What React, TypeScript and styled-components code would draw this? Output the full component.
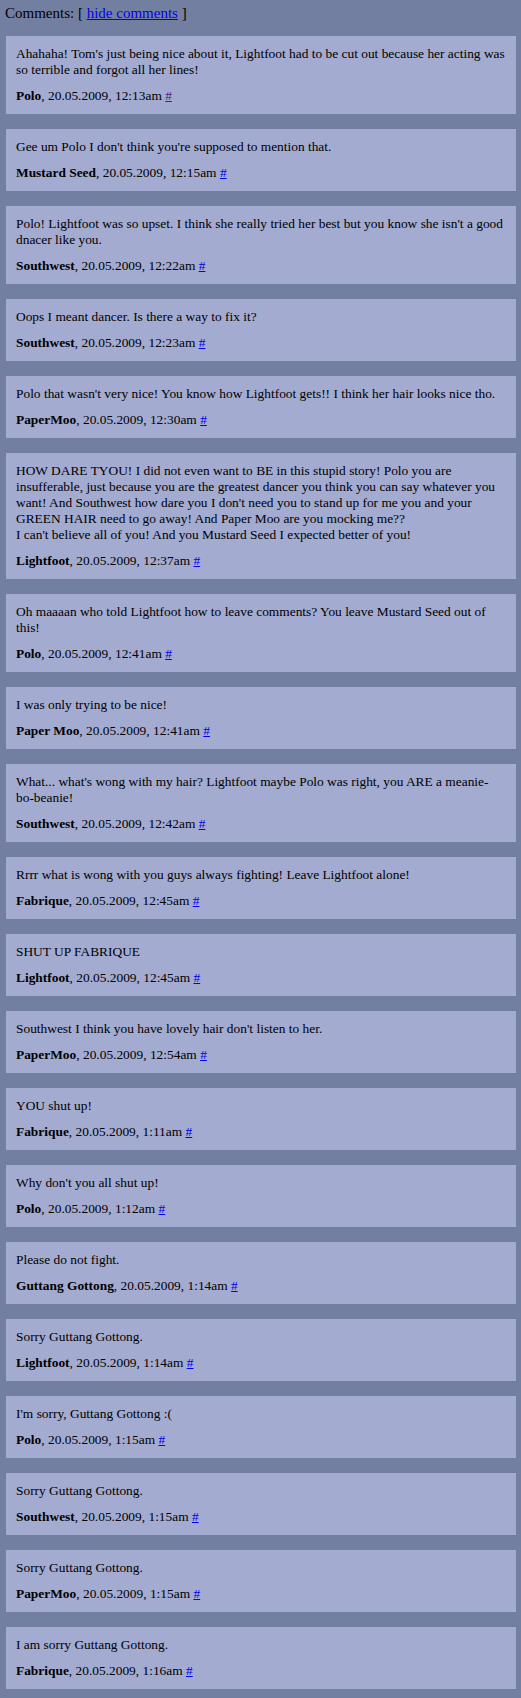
import styled, { createGlobalStyle } from "styled-components";

// old-school comment thread, one box per comment

const GlobalStyle = createGlobalStyle`
  html, body {
    margin: 0;
    padding: 0;
    background: #737fa0;
  }
  body {
    font-family: "Liberation Serif", "Times New Roman", serif;
    color: #000;
  }
`;

const Page = styled.div`
  padding: 4px 5px 9px 6px;
`;

const Header = styled.div`
  font-size: 15px;
  line-height: 18px;
  margin: 0 0 14px -1px;
`;

const Link = styled.a<{ $visited?: boolean }>`
  color: ${(p) => (p.$visited ? "#551a8b" : "#0000ee")};
  text-decoration: underline;
`;

const List = styled.div`
  display: flex;
  flex-direction: column;
  gap: 15px;
`;

const Card = styled.div`
  background: #a3abd0;
  padding: 10px;
  font-size: 13.4px;
  line-height: 16px;
`;

const Body = styled.div`
  margin-bottom: 10px;
`;

const Meta = styled.div``;

type Comment = {
  name: string;
  time: string;
  text: string[];
  visited?: boolean;
};

const comments: Comment[] = [
  {
    name: "Polo",
    time: "12:13am",
    visited: true,
    text: [
      "Ahahaha! Tom's just being nice about it, Lightfoot had to be cut out because her acting was so terrible and forgot all her lines!",
    ],
  },
  { name: "Mustard Seed", time: "12:15am", text: ["Gee um Polo I don't think you're supposed to mention that."] },
  {
    name: "Southwest",
    time: "12:22am",
    text: [
      "Polo! Lightfoot was so upset. I think she really tried her best but you know she isn't a good dnacer like you.",
    ],
  },
  { name: "Southwest", time: "12:23am", text: ["Oops I meant dancer. Is there a way to fix it?"] },
  {
    name: "PaperMoo",
    time: "12:30am",
    text: ["Polo that wasn't very nice! You know how Lightfoot gets!! I think her hair looks nice tho."],
  },
  {
    name: "Lightfoot",
    time: "12:37am",
    text: [
      "HOW DARE TYOU! I did not even want to BE in this stupid story! Polo you are insufferable, just because you are the greatest dancer you think you can say whatever you want! And Southwest how dare you I don't need you to stand up for me you and your GREEN HAIR need to go away! And Paper Moo are you mocking me??",
      "I can't believe all of you! And you Mustard Seed I expected better of you!",
    ],
  },
  {
    name: "Polo",
    time: "12:41am",
    text: ["Oh maaaan who told Lightfoot how to leave comments? You leave Mustard Seed out of this!"],
  },
  { name: "Paper Moo", time: "12:41am", text: ["I was only trying to be nice!"] },
  {
    name: "Southwest",
    time: "12:42am",
    text: ["What... what's wong with my hair? Lightfoot maybe Polo was right, you ARE a meanie-bo-beanie!"],
  },
  {
    name: "Fabrique",
    time: "12:45am",
    text: ["Rrrr what is wong with you guys always fighting! Leave Lightfoot alone!"],
  },
  { name: "Lightfoot", time: "12:45am", text: ["SHUT UP FABRIQUE"] },
  { name: "PaperMoo", time: "12:54am", text: ["Southwest I think you have lovely hair don't listen to her."] },
  { name: "Fabrique", time: "1:11am", text: ["YOU shut up!"] },
  { name: "Polo", time: "1:12am", text: ["Why don't you all shut up!"] },
  { name: "Guttang Gottong", time: "1:14am", text: ["Please do not fight."] },
  { name: "Lightfoot", time: "1:14am", text: ["Sorry Guttang Gottong."] },
  { name: "Polo", time: "1:15am", text: ["I'm sorry, Guttang Gottong :("] },
  { name: "Southwest", time: "1:15am", text: ["Sorry Guttang Gottong."] },
  { name: "PaperMoo", time: "1:15am", text: ["Sorry Guttang Gottong."] },
  { name: "Fabrique", time: "1:16am", text: ["I am sorry Guttang Gottong."] },
];

function App() {
  return (
    <Page>
      <GlobalStyle />
      <Header>
        Comments: [ <Link href="#">hide comments</Link> ]
      </Header>
      <List>
        {comments.map((c, i) => (
          <Card key={i}>
            <Body>
              {c.text.map((t, j) => (
                <span key={j}>
                  {j > 0 && <br />}
                  {t}
                </span>
              ))}
            </Body>
            <Meta>
              <b>{c.name}</b>, 20.05.2009, {c.time}{" "}
              <Link href="#" $visited={c.visited}>
                #
              </Link>
            </Meta>
          </Card>
        ))}
      </List>
    </Page>
  );
}

export default App;
